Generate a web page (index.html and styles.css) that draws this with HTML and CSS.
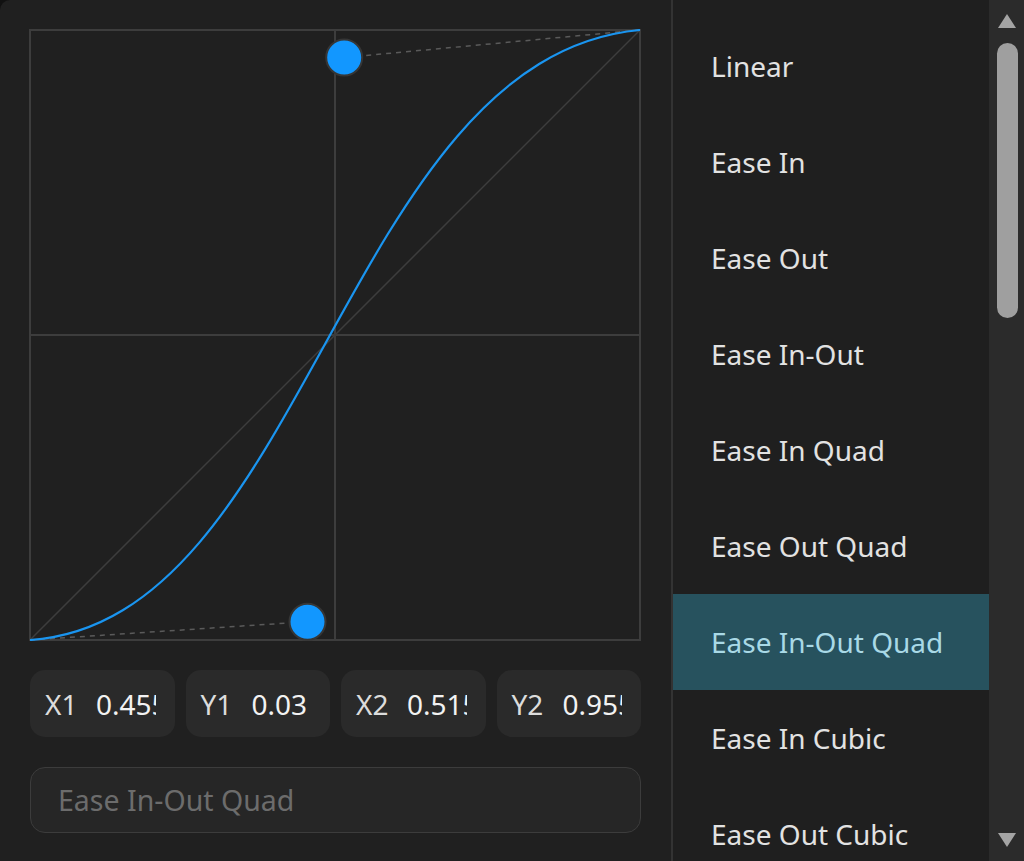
FILE: index.html
```html
<!DOCTYPE html>
<html>
<head>
<meta charset="utf-8">
<link rel="stylesheet" href="styles.css">
</head>
<body>
<div class="app">
  <section class="editor">
    <svg class="graph" width="612" height="612" viewBox="0 0 612 612">
      <rect x="1" y="1" width="610" height="610" fill="none" stroke="#3d3d3d" stroke-width="2"/>
      <line x1="306" y1="1" x2="306" y2="611" stroke="#3d3d3d" stroke-width="2"/>
      <line x1="1" y1="306" x2="611" y2="306" stroke="#3d3d3d" stroke-width="2"/>
      <line x1="1" y1="611" x2="611" y2="1" stroke="#3d3d3d" stroke-width="1.5"/>
      <line x1="1" y1="611" x2="278.5" y2="592.7" stroke="#5a5a5a" stroke-width="1.5" stroke-dasharray="5 5"/>
      <line x1="611" y1="1" x2="315.2" y2="28.5" stroke="#5a5a5a" stroke-width="1.5" stroke-dasharray="5 5"/>
      <path d="M1 611 C278.5 592.7 315.2 28.5 611 1" fill="none" stroke="#1a95f0" stroke-width="2.2"/>
      <circle cx="278.5" cy="592.7" r="18" fill="#1297ff" stroke="#363636" stroke-width="2"/>
      <circle cx="315.2" cy="28.5" r="18" fill="#1297ff" stroke="#363636" stroke-width="2"/>
    </svg>
    <div class="coords">
      <div class="coord"><span class="lbl">X1</span><span class="val">0.455</span></div>
      <div class="coord"><span class="lbl">Y1</span><span class="val">0.03</span></div>
      <div class="coord"><span class="lbl">X2</span><span class="val">0.515</span></div>
      <div class="coord"><span class="lbl">Y2</span><span class="val">0.955</span></div>
    </div>
    <div class="name-field"><span class="placeholder">Ease In-Out Quad</span></div>
  </section>
  <section class="presets">
    <ul class="list">
      <li class="item">Linear</li>
      <li class="item">Ease In</li>
      <li class="item">Ease Out</li>
      <li class="item">Ease In-Out</li>
      <li class="item">Ease In Quad</li>
      <li class="item">Ease Out Quad</li>
      <li class="item selected">Ease In-Out Quad</li>
      <li class="item">Ease In Cubic</li>
      <li class="item">Ease Out Cubic</li>
      <li class="item">Ease In-Out Cubic</li>
    </ul>
    <div class="scrollbar">
      <div class="arrow up"></div>
      <div class="thumb"></div>
      <div class="track-rest"></div>
      <div class="arrow down"></div>
    </div>
  </section>
</div>
</body>
</html>
```
FILE: styles.css
```css
* { box-sizing: border-box; }
html, body {
  margin: 0;
  padding: 0;
  background: #111111;
  overflow: hidden;
}
body {
  font-family: "Noto Sans", "Open Sans", sans-serif;
}
.app {
  display: flex;
  width: 1024px;
  height: 861px;
  background: #202020;
  border-top-left-radius: 10px;
  overflow: hidden;
}
.editor {
  width: 671px;
  flex: none;
  padding: 29px 30px 0 29px;
  display: flex;
  flex-direction: column;
}
.graph {
  display: block;
  flex: none;
}
.coords {
  margin-top: 29px;
  display: grid;
  grid-template-columns: repeat(4, 1fr);
  column-gap: 11px;
  padding-left: 1px;
}
.coord {
  height: 67px;
  border-radius: 15px;
  background: #2a2a2a;
  display: flex;
  align-items: center;
  padding: 0 19px 0 15px;
  font-size: 28px;
  overflow: hidden;
  white-space: nowrap;
}
.lbl {
  color: #dcdcdc;
  flex: none;
  width: 51px;
}
.val {
  color: #f2f2f2;
  overflow: hidden;
  flex: 1;
  min-width: 0;
}
.name-field {
  margin-top: 30px;
  margin-left: 1px;
  height: 66px;
  border: 1.5px solid #3c3c3c;
  border-radius: 15px;
  background: #262626;
  display: flex;
  align-items: center;
  padding-left: 27px;
  font-size: 28.5px;
}
.placeholder {
  color: #6c6c6c;
}
.presets {
  flex: 1;
  display: flex;
  border-left: 2px solid #333333;
  background: #1f1f1f;
}
.list {
  list-style: none;
  margin: 0;
  padding: 18px 0 0 0;
  flex: 1;
  overflow: hidden;
}
.item {
  height: 96px;
  display: flex;
  align-items: center;
  padding-left: 38px;
  font-size: 28px;
  color: #e2e2e2;
  white-space: nowrap;
}
.item.selected {
  background: #27525e;
  color: #a9d9e6;
}
.scrollbar {
  width: 35px;
  flex: none;
  background: #2b2b2b;
  display: flex;
  flex-direction: column;
  align-items: center;
  padding: 14px 0 14px 0;
}
.arrow {
  width: 0;
  height: 0;
  border-left: 9px solid transparent;
  border-right: 9px solid transparent;
  flex: none;
}
.arrow.up {
  border-bottom: 14px solid #a4a4a4;
  margin-left: 1px;
}
.arrow.down {
  border-top: 14px solid #a4a4a4;
  margin-left: 1px;
}
.thumb {
  margin-top: 15px;
  width: 21px;
  height: 275px;
  border-radius: 11px;
  background: #9f9f9f;
  flex: none;
  margin-left: 1px;
}
.track-rest {
  flex: 1;
}
```
